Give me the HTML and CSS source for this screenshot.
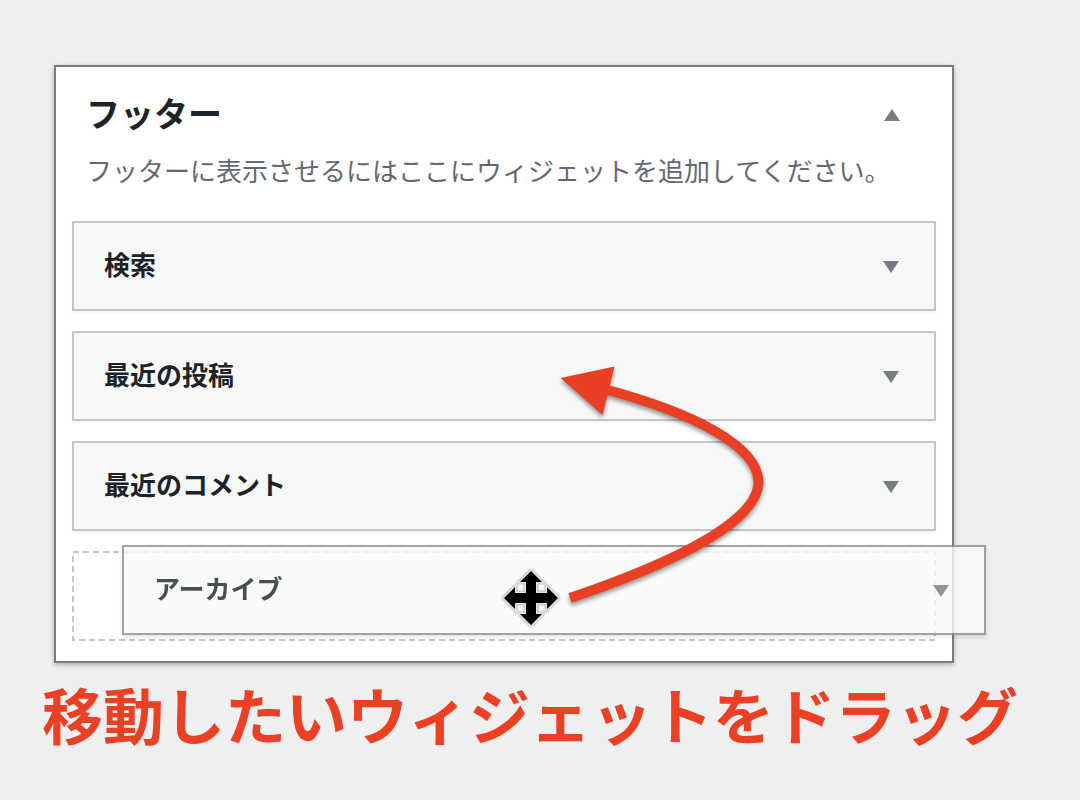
FILE: index.html
```html
<!DOCTYPE html>
<html lang="ja">
<head>
<meta charset="utf-8">
<title>ウィジェット</title>
<link rel="stylesheet" href="styles.css">
</head>
<body>
<main class="page">
  <section class="panel">
    <header class="panel-header">
      <h1 class="panel-title">フッター</h1>
      <button class="toggle" type="button" aria-label="フッターを閉じる"><svg class="caret" viewBox="0 0 16 12"><path d="M8 0L16 12H0Z"/></svg></button>
    </header>
    <p class="description">フッターに表示させるにはここにウィジェットを追加してください。</p>
    <div class="widgets">
      <div class="widget">
        <h2 class="widget-title">検索</h2>
        <button class="toggle" type="button" aria-label="検索を開く"><svg class="caret" viewBox="0 0 16 12"><path d="M0 0H16L8 12Z"/></svg></button>
      </div>
      <div class="widget">
        <h2 class="widget-title">最近の投稿</h2>
        <button class="toggle" type="button" aria-label="最近の投稿を開く"><svg class="caret" viewBox="0 0 16 12"><path d="M0 0H16L8 12Z"/></svg></button>
      </div>
      <div class="widget">
        <h2 class="widget-title">最近のコメント</h2>
        <button class="toggle" type="button" aria-label="最近のコメントを開く"><svg class="caret" viewBox="0 0 16 12"><path d="M0 0H16L8 12Z"/></svg></button>
      </div>
      <div class="placeholder">
        <svg class="dashes" aria-hidden="true"><rect x="1" y="1"/></svg>
        <div class="widget dragged">
          <h2 class="widget-title">アーカイブ</h2>
          <button class="toggle" type="button" aria-label="アーカイブを開く"><svg class="caret" viewBox="0 0 16 12"><path d="M0 0H16L8 12Z"/></svg></button>
        </div>
        <svg class="cursor" viewBox="-30 -30 60 60" aria-hidden="true">
          <path d="M0-27L11-16H5V-5H16V-11L27 0L16 11V5H5V16H11L0 27L-11 16H-5V5H-16V11L-27 0L-16-11V-5H-5V-16H-11Z"/>
        </svg>
      </div>
    </div>
    <svg class="arrow" viewBox="550 355 230 260" aria-hidden="true">
      <path class="arrow-line" d="M570 598C680 561 758 520 758.500 482C758 446 694 413 604 389"/>
      <path class="arrow-head" d="M560.500 378L614.500 366.500L602.500 415Z"/>
    </svg>
  </section>
  <p class="caption">移動したいウィジェットをドラッグ</p>
</main>
</body>
</html>
```

FILE: styles.css
```css
* {
  box-sizing: border-box;
}

body {
  margin: 0;
  background: #efefef;
  color: #1d2327;
  font-family: "Noto Sans CJK JP", sans-serif;
}

h1, h2, p {
  margin: 0;
}

.page {
  padding: 65px 40px 0;
}

.panel {
  position: relative;
  margin: 0 86px 0 14px;
  padding: 20px 16px;
  background: #fff;
  border: 2px solid #787c82;
  box-shadow: 0 2px 5px rgba(0, 0, 0, 0.25);
}

.panel-header {
  display: flex;
  align-items: center;
  justify-content: space-between;
  height: 56px;
  padding: 0 36px 0 14px;
}

.panel-title {
  padding-bottom: 4px;
  font-size: 34px;
  line-height: 52px;
  font-weight: 700;
}

.toggle {
  display: flex;
  padding: 0;
  border: 0;
  background: none;
}

.caret {
  width: 16px;
  height: 12px;
  fill: #787c82;
}

.description {
  padding: 0 14px;
  color: #646970;
  font-size: 26px;
  line-height: 54px;
  white-space: nowrap;
}

.widgets {
  display: grid;
  gap: 20px;
  margin-top: 24px;
}

.widget {
  display: flex;
  align-items: center;
  justify-content: space-between;
  height: 90px;
  padding: 2px 35px 0 30px;
  background: #f6f7f7;
  border: 2px solid #c3c4c7;
  box-shadow: 0 2px 2px rgba(0, 0, 0, 0.04);
}

.widget-title {
  padding-bottom: 6px;
  font-size: 26px;
  line-height: 40px;
  font-weight: 700;
}

.placeholder {
  position: relative;
  height: 90px;
}

.dashes {
  display: block;
  width: 100%;
  height: 100%;
}

.dashes rect {
  width: calc(100% - 2px);
  height: calc(100% - 2px);
  fill: none;
  stroke: #c3c4c7;
  stroke-width: 2px;
  stroke-dasharray: 6 4;
}

.dragged {
  position: absolute;
  left: 50px;
  top: -6px;
  width: 100%;
  background: #f8faf9;
  border-color: #8a8d92;
  box-shadow: 0 2px 4px rgba(0, 0, 0, 0.15);
  opacity: 0.8;
}

.cursor {
  position: absolute;
  left: 429px;
  top: 17px;
  width: 60px;
  height: 60px;
  overflow: visible;
  fill: #000;
  stroke: #e4e4e4;
  stroke-width: 3px;
  paint-order: stroke;
  filter: drop-shadow(0 0 1px rgba(0, 0, 0, 0.5));
}

.arrow {
  position: absolute;
  left: 494px;
  top: 288px;
  width: 230px;
  height: 260px;
  filter: drop-shadow(0 3px 2px rgba(0, 0, 0, 0.4));
}

.arrow-line {
  fill: none;
  stroke: #e94025;
  stroke-width: 10px;
}

.arrow-head {
  fill: #e94025;
}

.caption {
  margin-top: 6px;
  padding-left: 2px;
  color: #ec4025;
  font-size: 61px;
  line-height: 90px;
  font-weight: 700;
  white-space: nowrap;
}
```
